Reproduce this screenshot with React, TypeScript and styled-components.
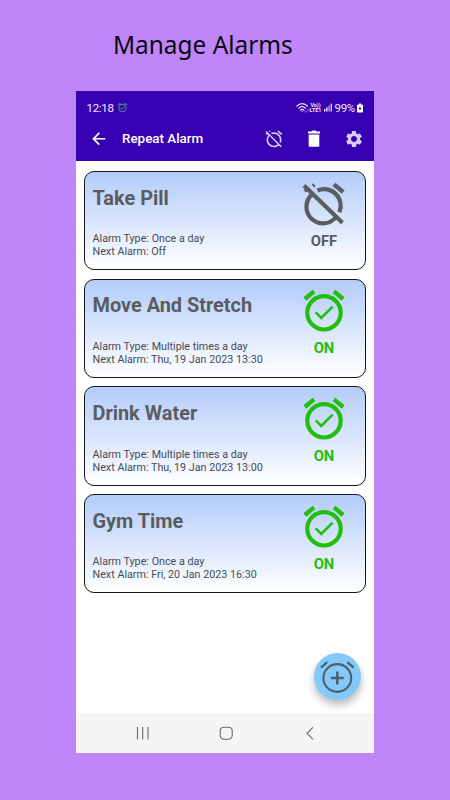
import React from "react";
import styled, { createGlobalStyle } from "styled-components";
import { MdAlarmOff, MdAlarmOn, MdArrowBack, MdSettings } from "react-icons/md";

const GlobalStyle = createGlobalStyle`
  *, *::before, *::after { box-sizing: border-box; }
  body { margin: 0; background: #bf86fa; font-family: Roboto, "Liberation Sans", sans-serif; }
  svg { display: block; flex: none; }
`;

const Page = styled.main`
  width: 450px;
  height: 800px;
  overflow: hidden;
  background: #bf86fa;
`;

const Heading = styled.h1`
  margin: 0;
  height: 91px;
  padding: 27px 0 0 113px;
  font: 400 26px/34px "Noto Sans", "Open Sans", sans-serif;
  color: #0c0614;
  white-space: nowrap;
  transform: scaleX(0.938);
  transform-origin: 113px 0;
`;

const Phone = styled.section`
  display: flex;
  flex-direction: column;
  width: 298px;
  height: 662px;
  margin-left: 76px;
  background: #fff;
`;

const Header = styled.header`
  height: 70px;
  background: #3700b0;
  color: #fff;
`;

const StatusBar = styled.div`
  display: flex;
  align-items: center;
  height: 33px;
  padding: 0 11.5px 0 10.5px;
  font-size: 11.5px;
  line-height: 14px;
  color: #f1ebff;
`;

const Clock = styled.span`
  width: 27px;
  margin-right: 3px;
  letter-spacing: -0.3px;
  white-space: nowrap;
`;

const Signals = styled.div`
  display: flex;
  align-items: center;
  margin-left: auto;
`;

const Volte = styled.span`
  display: flex;
  flex-direction: column;
  align-items: center;
  width: 12px;
  margin: 0 2px 0 -0.5px;
  font-size: 5.4px;
  font-weight: 700;
  line-height: 5px;
`;

const Battery = styled.span`
  width: 21px;
  margin: 0 1px 0 3px;
  font-size: 11.5px;
  letter-spacing: -0.3px;
`;

const Toolbar = styled.div`
  display: flex;
  align-items: center;
  height: 29px;
  padding: 0 10px 0 13px;
`;

const ToolbarTitle = styled.h2`
  flex: 1;
  margin: 0 0 0 13.5px;
  font-size: 13.4px;
  font-weight: 500;
  line-height: 18px;
`;

const IconButton = styled.button<{ $tint?: string }>`
  display: flex;
  padding: 0;
  border: 0;
  background: none;
  color: ${(p) => p.$tint ?? "#fff"};
`;

const Actions = styled.div`
  display: flex;
  gap: 20px;
`;

const Content = styled.div`
  position: relative;
  flex: 1;
  padding: 10px 8px 0;
`;

const AlarmList = styled.div`
  display: flex;
  flex-direction: column;
  gap: 8.3px;
`;

const Card = styled.article`
  display: flex;
  justify-content: space-between;
  height: 99.4px;
  padding: 0 16px 0 7.5px;
  border: 1px solid #15171c;
  border-radius: 10px;
  background: linear-gradient(#b3ccfa, #ffffff);
`;

const Details = styled.div`
  padding-top: 13.7px;
`;

const AlarmName = styled.h3`
  margin: 0 0 21.7px;
  font-size: 19.9px;
  font-weight: 700;
  line-height: 26px;
  color: #595d60;
`;

const Info = styled.p`
  margin: 0;
  font-size: 10.75px;
  line-height: 12.8px;
  color: #484c52;
`;

const Status = styled.div<{ $on: boolean }>`
  display: flex;
  flex-direction: column;
  align-items: center;
  width: 50px;
  padding-top: 6.5px;
  font-size: 14.8px;
  font-weight: 700;
  line-height: 18px;
  color: ${(p) => (p.$on ? "#22be0c" : "#595d60")};

  svg { margin-bottom: 3.2px; }
`;

const AddButton = styled.button`
  position: absolute;
  right: 13px;
  bottom: 13px;
  width: 47px;
  height: 47px;
  padding: 0;
  border: 0;
  border-radius: 50%;
  background: #84c9fa;
  box-shadow: 0 5px 9px rgba(0, 0, 0, 0.28);
`;

const NavBar = styled.nav`
  display: flex;
  align-items: center;
  justify-content: space-between;
  height: 40px;
  padding: 0 54px 0 57px;
  background: #f5f5f5;
`;

interface Alarm {
  name: string;
  type: string;
  next: string;
  on: boolean;
}

const alarms: Alarm[] = [
  { name: "Take Pill", type: "Once a day", next: "Off", on: false },
  { name: "Move And Stretch", type: "Multiple times a day", next: "Thu, 19 Jan 2023 13:30", on: true },
  { name: "Drink Water", type: "Multiple times a day", next: "Thu, 19 Jan 2023 13:00", on: true },
  { name: "Gym Time", type: "Once a day", next: "Fri, 20 Jan 2023 16:30", on: true },
];

const AlarmSetIcon = () => (
  <svg width="50" height="50" viewBox="0 0 50 50" fill="none" stroke="currentColor">
    <circle cx="25" cy="26.8" r="16.7" strokeWidth="4.200" />
    <path d="M5.800 13L15 5.400M44.200 13L35 5.400" strokeWidth="4.300" />
    <path d="M16.700 26.400l5.600 5.500L33.600 20.600" strokeWidth="2.600" />
  </svg>
);

const AlarmUnsetIcon = () => (
  <svg width="50" height="50" viewBox="0 0 50 50" fill="none" stroke="currentColor">
    <path d="M18.500 11.500A16.600 16.600 0 0 1 40.400 33.200" strokeWidth="4.200" />
    <path d="M13.300 15.100A16.600 16.600 0 1 0 36.700 38.500" strokeWidth="4.200" />
    <path d="M44.200 13L35 5.400" strokeWidth="4.300" />
    <path d="M5 6.600L43.400 43.800" strokeWidth="4.200" />
    <path d="M5.700 12.200l3.300-2.700" strokeWidth="3.400" />
    <path d="M13.400 5l2.600 2.900" strokeWidth="2" />
  </svg>
);

const TrashIcon = () => (
  <svg width="20" height="20" viewBox="0 0 20 20" fill="currentColor">
    <path d="M4 2.500h3.500l1-1h3l1 1H16v2H4zM4.700 5.500h10.600V17q0 .7-.7.700H5.400Q4.700 17.700 4.700 17z" />
  </svg>
);

const WifiIcon = () => (
  <svg width="14" height="12" viewBox="0 0 14 12" fill="none" stroke="currentColor" strokeLinecap="round">
    <path d="M1 4C4 .9 8.300 .9 11.300 4M2.800 6.200c2-2 4.700-2 6.700 0M4.500 8.100c1-.9 2.300-.9 3.300 0" strokeWidth="1.200" />
    <circle cx="6.150" cy="9.500" r=".6" fill="currentColor" stroke="none" />
    <path d="M9.800 7.600v2.700M9.100 9.600l.7.8.7-.8M12 10.300V7.600M11.400 8.300l.6-.7.6.7" strokeWidth=".5" opacity=".6" />
  </svg>
);

const SignalIcon = () => (
  <svg width="8" height="9" viewBox="0 0 8 9" fill="currentColor">
    <rect x="0" y="6" width="1.400" height="2.500" />
    <rect x="2.200" y="4.300" width="1.400" height="4.200" />
    <rect x="4.400" y="2.400" width="1.400" height="6.100" opacity=".65" />
    <rect x="6.600" y=".5" width="1.400" height="8" opacity=".85" />
  </svg>
);

const BatteryIcon = () => (
  <svg width="6" height="10" viewBox="0 0 6 10">
    <path d="M2 .5h2v1h1q1 0 1 1V8.500q0 1-1 1H1q-1 0-1-1v-6q0-1 1-1h1z" fill="#fff" />
    <path d="M3.300 3L1.400 5.900h1.300L2.400 8l2.200-3H3.200z" fill="#3700b0" />
  </svg>
);

const AddAlarmIcon = () => (
  <svg width="47" height="47" viewBox="0 0 47 47" fill="none" stroke="#48606f">
    <circle cx="23.300" cy="25" r="13.900" strokeWidth="2.100" />
    <path d="M23.300 18.600v12.800M16.900 25h12.800" strokeWidth="2.500" />
    <path d="M7 14.600l6.300-5.600M33.300 9l6.300 5.600" strokeWidth="2.300" />
  </svg>
);

export default function App() {
  return (
    <>
      <GlobalStyle />
      <Page>
        <Heading>Manage Alarms</Heading>
        <Phone>
          <Header>
            <StatusBar>
              <Clock>12:18</Clock>
              <MdAlarmOn size={11} color="#489c83" />
              <Signals>
                <WifiIcon />
                <Volte>
                  <span>Vo))</span>
                  <span>LTE1</span>
                </Volte>
                <SignalIcon />
                <Battery>99%</Battery>
                <BatteryIcon />
              </Signals>
            </StatusBar>
            <Toolbar>
              <IconButton aria-label="Back"><MdArrowBack size={19.5} /></IconButton>
              <ToolbarTitle>Repeat Alarm</ToolbarTitle>
              <Actions>
                <IconButton aria-label="Turn off" $tint="#d8cdf8"><MdAlarmOff size={20} /></IconButton>
                <IconButton aria-label="Delete"><TrashIcon /></IconButton>
                <IconButton aria-label="Settings" $tint="#d8cdf8"><MdSettings size={20} /></IconButton>
              </Actions>
            </Toolbar>
          </Header>
          <Content>
            <AlarmList>
              {alarms.map((alarm) => (
                <Card key={alarm.name}>
                  <Details>
                    <AlarmName>{alarm.name}</AlarmName>
                    <Info>Alarm Type: {alarm.type}</Info>
                    <Info>Next Alarm: {alarm.next}</Info>
                  </Details>
                  <Status $on={alarm.on}>
                    {alarm.on ? <AlarmSetIcon /> : <AlarmUnsetIcon />}
                    {alarm.on ? "ON" : "OFF"}
                  </Status>
                </Card>
              ))}
            </AlarmList>
            <AddButton aria-label="Add alarm"><AddAlarmIcon /></AddButton>
          </Content>
          <NavBar>
            <svg width="20" height="20" viewBox="0 0 20 20" stroke="#696969" strokeWidth="1.100">
              <path d="M4.500 4v12.500M9.700 4v12.500M15 4v12.500" />
            </svg>
            <svg width="20" height="20" viewBox="0 0 20 20" fill="none" stroke="#696969" strokeWidth="1.100">
              <rect x="3.200" y="4.200" width="12" height="12" rx="3.600" />
            </svg>
            <svg width="20" height="20" viewBox="0 0 20 20" fill="none" stroke="#696969" strokeWidth="1.100">
              <path d="M13 4.300L7 10.300l6 6" />
            </svg>
          </NavBar>
        </Phone>
      </Page>
    </>
  );
}
